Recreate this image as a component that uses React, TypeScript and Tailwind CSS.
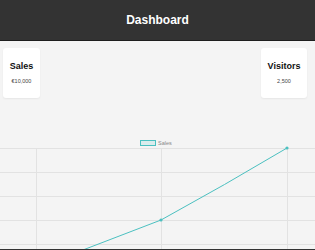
import React from "react";

export default function App() {
  const teal = "rgb(75,192,192)";
  return (
    <div
      className="w-[315px] h-[250px] overflow-hidden bg-[#f4f4f4] flex flex-col"
      style={{ fontFamily: '"Liberation Sans", Arial, sans-serif' }}
    >
      <header className="h-[41px] shrink-0 bg-[#333333] border-b border-[#1e1e1e] flex items-center justify-center">
        <h1 className="text-white font-bold text-[12px] leading-none">Dashboard</h1>
      </header>
      <div className="flex justify-between pl-[3px] pr-[8px] pt-[7px]">
        <div className="w-[37px] h-[50px] bg-white rounded-[3px] shadow-[0_1px_2px_rgba(0,0,0,0.06)] flex flex-col items-center pt-[14px]">
          <div className="text-[9px] font-bold text-[#111] leading-none">Sales</div>
          <div className="text-[5.5px] text-[#444] mt-[8px] leading-none">€10,000</div>
        </div>
        <div className="w-[46px] h-[50px] bg-white rounded-[3px] shadow-[0_1px_2px_rgba(0,0,0,0.06)] flex flex-col items-center pt-[14px]">
          <div className="text-[9px] font-bold text-[#111] leading-none">Visitors</div>
          <div className="text-[5.5px] text-[#444] mt-[8px] leading-none">2,500</div>
        </div>
      </div>
      <svg width="315" height="112" className="mt-[39px] shrink-0 block">
        {[11, 35, 59, 83, 107].map((y) => (
          <line key={y} x1="0" x2="315" y1={y + 0.5} y2={y + 0.5} stroke="#e2e2e2" strokeWidth="1" />
        ))}
        {[36, 161, 287].map((x) => (
          <line key={x} x1={x + 0.5} x2={x + 0.5} y1="11" y2="112" stroke="#e2e2e2" strokeWidth="1" />
        ))}
        <rect x="140.5" y="3.5" width="15" height="5" fill="rgba(75,192,192,0.15)" stroke={teal} strokeWidth="1" />
        <text x="158" y="8" fontSize="5.5" fill="#888">Sales</text>
        <path d="M36 131 L161 83 Q225 48 287 11" fill="none" stroke={teal} strokeWidth="1" />
        <circle cx="161" cy="83" r="1.6" fill={teal} />
        <circle cx="287" cy="11" r="1.6" fill={teal} />
      </svg>
      <div className="h-[10px] bg-[#333333] shrink-0" />
    </div>
  );
}
